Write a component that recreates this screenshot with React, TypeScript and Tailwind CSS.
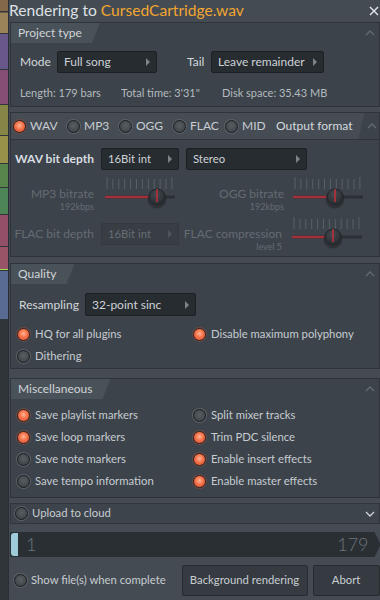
import React from 'react';

const Radio = ({ on }: { on?: boolean }) => (
  <span
    className={`inline-block w-[13px] h-[13px] rounded-full shrink-0 border ${
      on
        ? 'border-[#3a2622] bg-[radial-gradient(circle_at_50%_42%,#ffb495_0%,#f4724a_45%,#cf4a2c_100%)] shadow-[0_0_0_1px_#6b4b45]'
        : 'border-[#1e2225] bg-[radial-gradient(circle_at_50%_42%,#585e63_0%,#474c51_55%,#33373b_100%)] shadow-[0_0_0_1px_#5c6268]'
    }`}
  />
);

const Arrow = ({ dim }: { dim?: boolean }) => (
  <span
    className={`w-0 h-0 border-y-[4px] border-y-transparent border-l-[4px] ${
      dim ? 'border-l-[#4d545a]' : 'border-l-[#7c848b]'
    }`}
  />
);

const Drop = ({ text, className, dim }: { text: string; className: string; dim?: boolean }) => (
  <div
    className={`h-[22px] shrink-0 flex items-center justify-between pl-[6px] pr-[6px] rounded-[2px] border whitespace-nowrap ${
      dim ? 'bg-[#383e44] border-[#33393e] text-[#656d74]' : 'bg-[#272c31] border-[#1c2023] text-[#cdd2d6]'
    } ${className}`}
  >
    <span>{text}</span>
    <Arrow dim={dim} />
  </div>
);

const Chevron = ({ down }: { down?: boolean }) => (
  <svg width="10" height="6" viewBox="0 0 10 6" className="shrink-0">
    <path
      d={down ? 'M1 1 L5 5 L9 1' : 'M1 5 L5 1 L9 5'}
      fill="none"
      stroke={down ? '#d0d5d9' : '#646c73'}
      strokeWidth="1.3"
    />
  </svg>
);

const Slider = ({ knob }: { knob: number }) => (
  <svg width="74" height="40" viewBox="0 0 74 40" className="shrink-0">
    <defs>
      <radialGradient id="kg" cx="45%" cy="35%" r="70%">
        <stop offset="0%" stopColor="#454b51" />
        <stop offset="100%" stopColor="#24282c" />
      </radialGradient>
    </defs>
    {Array.from({ length: 12 }).map((_, i) => {
      const x = 4 + i * 5.9;
      const edge = i === 0 || i === 11;
      return <line key={i} x1={x} x2={x} y1={edge ? 3 : 5} y2={15} stroke="#596168" strokeWidth="1" />;
    })}
    <line x1="2" x2="72" y1="23" y2="23" stroke="#2b3034" strokeWidth="3" />
    <line x1="2" x2={knob - 4} y1="23" y2="23" stroke="#a3303a" strokeWidth="2.5" />
    <circle cx={knob} cy="25" r="9.5" fill="#23272b" opacity="0.55" />
    <circle cx={knob} cy="23" r="8" fill="url(#kg)" stroke="#22262a" />
    <line x1={knob} x2={knob} y1="15" y2="28" stroke="#b8303b" strokeWidth="1.6" />
  </svg>
);

const Opt = ({ on, label }: { on?: boolean; label: string }) => (
  <div className="h-[22px] flex items-center gap-[5px] text-[#c6ccd1] whitespace-nowrap">
    <Radio on={on} />
    <span>{label}</span>
  </div>
);

const Tab = ({ title }: { title: string }) => (
  <div className="h-[20px] flex items-center pl-[7px] pr-[18px] bg-[#4a5259] text-[#cfd4d8] text-[12px] [clip-path:polygon(0_0,100%_0,calc(100%-8px)_100%,0_100%)]">
    {title}
  </div>
);

const Section = ({ title, children, className }: { title: string; children: React.ReactNode; className: string }) => (
  <div className={`ml-[1px] mr-[4px] border border-[#2e3439] bg-[#3c434a] ${className}`}>
    <div className="h-[20px] flex items-stretch">
      <Tab title={title} />
      <div className="flex-1" />
      <div className="flex items-center pr-[4px]">
        <Chevron />
      </div>
    </div>
    {children}
  </div>
);

const Strip = () => (
  <div className="w-[8px] shrink-0 flex flex-col gap-[1px] bg-[#30353a]">
    <div className="h-[11px] bg-[#84684a]" />
    <div className="h-[21px] bg-[#9a8259] border-t border-[#6b5a44]" />
    <div className="h-[35px] bg-[#675889]" />
    <div className="h-[34px] bg-[#864e74]" />
    <div className="h-[30px] bg-[#878447]" />
    <div className="h-[27px] bg-[#97914a]" />
    <div className="h-[23px] bg-[#57854b]" />
    <div className="h-[26px] bg-[#4d8557]" />
    <div className="h-[31px] bg-[#915068]" />
    <div className="h-[23px] bg-[#9a5468] border-b border-[#9be04a]" />
    <div className="h-[48px] bg-[#5a6b93]" />
  </div>
);

export default function App() {
  return (
    <div className="w-[380px] h-[600px] flex overflow-hidden [font-family:Lato,sans-serif] text-[11.3px] text-[#c5cbd0]">
      <Strip />
      <div className="flex-1 flex flex-col bg-[#444b52] border-l border-[#2a2f34]">
        {/* title bar */}
        <div className="h-[22px] shrink-0 flex items-center pr-[5px]">
          <span className="text-[15.6px] text-[#dde1e5] whitespace-nowrap">
            Rendering to <span className="text-[#f2a531]">CursedCartridge.wav</span>
          </span>
          <span className="flex-1" />
          <svg width="10" height="10" viewBox="0 0 10 10">
            <path d="M1 1 L9 9 M9 1 L1 9" stroke="#e4e7ea" strokeWidth="1.4" />
          </svg>
        </div>

        {/* project type */}
        <Section title="Project type" className="pb-[6px]">
          <div className="mt-[8px] h-[22px] flex items-center pl-[9px] text-[#d3d8dc] text-[12px]">
            <span className="w-[37px]">Mode</span>
            <Drop text="Full song" className="w-[100px]" />
            <span className="ml-[30px] w-[24px]">Tail</span>
            <Drop text="Leave remainder" className="w-[113px]" />
          </div>
          <div className="mt-[13px] h-[14px] flex items-center pl-[9px] text-[11px] text-[#b3babf] whitespace-nowrap">
            <span className="w-[101px]">Length: 179 bars</span>
            <span className="w-[101px]">Total time: 3'31"</span>
            <span>Disk space: 35.43 MB</span>
          </div>
        </Section>

        {/* output format */}
        <div className="mt-[5px] ml-[1px] mr-[4px] border border-[#2e3439] bg-[#3c434a] pb-[2px]">
          <div className="h-[27px] flex items-stretch border-b border-[#2f353a]">
            <div className="flex-1 flex items-center pl-[2px] pr-[12px] bg-[#454c54] text-[#c8cdd2] text-[12px] whitespace-nowrap [clip-path:polygon(0_0,100%_0,calc(100%-6px)_100%,0_100%)]">
              <div className="w-[54px] flex items-center gap-[4px]"><Radio on /><span>WAV</span></div>
              <div className="w-[52px] flex items-center gap-[4px]"><Radio /><span>MP3</span></div>
              <div className="w-[54px] flex items-center gap-[4px]"><Radio /><span>OGG</span></div>
              <div className="w-[52px] flex items-center gap-[4px]"><Radio /><span>FLAC</span></div>
              <div className="w-[51px] flex items-center gap-[4px]"><Radio /><span>MID</span></div>
              <span className="flex-1" />
              <span className="text-[#d5dade]">Output format</span>
            </div>
            <div className="w-[14px] flex items-center justify-center">
              <Chevron />
            </div>
          </div>
          <div className="mt-[8px] h-[22px] flex items-center">
            <span className="w-[83px] text-right font-bold text-[#d8dde1] text-[12px] whitespace-nowrap">WAV bit depth</span>
            <Drop text="16Bit int" className="ml-[7px] w-[78px]" />
            <Drop text="Stereo" className="ml-[7px] w-[121px]" />
          </div>
          <div className="mt-[4px] h-[40px] flex items-start text-[#646c73] whitespace-nowrap">
            <div className="w-[83px] pt-[13px] flex flex-col items-end">
              <span className="text-[12px] leading-[14px]">MP3 bitrate</span>
              <span className="text-[9px] leading-[12px]">192kbps</span>
            </div>
            <div className="ml-[9px]"><Slider knob={54} /></div>
            <div className="w-[107px] pt-[13px] flex flex-col items-end">
              <span className="text-[12px] leading-[14px]">OGG bitrate</span>
              <span className="text-[9px] leading-[12px]">192kbps</span>
            </div>
            <div className="ml-[7px]"><Slider knob={44} /></div>
          </div>
          <div className="h-[40px] flex items-start text-[#646c73] whitespace-nowrap">
            <div className="mt-[9px] h-[22px] flex items-center">
              <span className="w-[83px] text-right text-[12px]">FLAC bit depth</span>
              <Drop text="16Bit int" dim className="ml-[7px] w-[78px]" />
            </div>
            <div className="w-[103px] pt-[13px] flex flex-col items-end">
              <span className="text-[12px] leading-[14px]">FLAC compression</span>
              <span className="text-[9px] leading-[12px]">level 5</span>
            </div>
            <div className="ml-[8px]"><Slider knob={43} /></div>
          </div>
        </div>

        {/* quality */}
        <Section title="Quality" className="mt-[6px] pb-[1px]">
          <div className="mt-[9px] h-[23px] flex items-center pl-[8px] text-[#d3d8dc] text-[12px]">
            <span className="w-[66px]">Resampling</span>
            <Drop text="32-point sinc" className="w-[111px] h-[23px]" />
          </div>
          <div className="mt-[7px] pl-[6px] grid grid-cols-[176px_1fr]">
            <Opt on label="HQ for all plugins" />
            <Opt on label="Disable maximum polyphony" />
            <Opt label="Dithering" />
          </div>
        </Section>

        {/* miscellaneous */}
        <Section title="Miscellaneous" className="mt-[9px] pb-[5px]">
          <div className="mt-[5px] pl-[6px] grid grid-cols-[176px_1fr]">
            <Opt on label="Save playlist markers" />
            <Opt label="Split mixer tracks" />
            <Opt on label="Save loop markers" />
            <Opt on label="Trim PDC silence" />
            <Opt label="Save note markers" />
            <Opt on label="Enable insert effects" />
            <Opt label="Save tempo information" />
            <Opt on label="Enable master effects" />
          </div>
        </Section>

        {/* upload */}
        <div className="mt-[5px] ml-[1px] mr-[4px] h-[21px] flex items-center gap-[4px] pl-[4px] pr-[4px] bg-[#3d444b] border border-[#30363b] text-[#c8cdd2]">
          <Radio />
          <span>Upload to cloud</span>
          <span className="flex-1" />
          <Chevron down />
        </div>

        {/* progress */}
        <div className="mt-[8px] ml-[1px] mr-[3px] h-[25px] flex items-center bg-[#2a2f33] [clip-path:polygon(0_0,calc(100%-6px)_0,100%_50%,calc(100%-6px)_100%,0_100%)] text-[18px] font-light text-[#6d757c]">
          <div className="ml-[1px] w-[7px] h-[23px] rounded-l-[3px] bg-[#9fcbdb]" />
          <span className="ml-[8px]">1</span>
          <span className="flex-1" />
          <span className="mr-[12px]">179</span>
        </div>

        {/* bottom */}
        <div className="mt-[8px] ml-[5px] mr-[4px] h-[31px] flex items-center text-[#c8cdd2] whitespace-nowrap">
          <div className="flex items-center gap-[4px]">
            <Radio />
            <span>Show file(s) when complete</span>
          </div>
          <span className="flex-1" />
          <div className="w-[126px] h-[31px] flex items-center justify-center bg-[#353b41] border border-[#262b2f] rounded-[2px]">
            Background rendering
          </div>
          <div className="ml-[5px] w-[67px] h-[31px] flex items-center justify-center bg-[#353b41] border border-[#262b2f] rounded-[2px]">
            Abort
          </div>
        </div>
      </div>
    </div>
  );
}
